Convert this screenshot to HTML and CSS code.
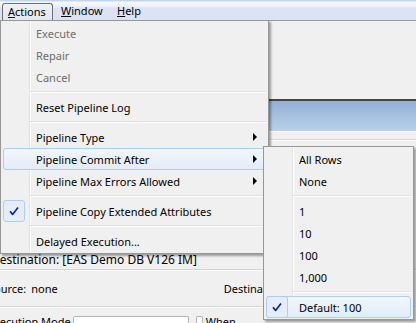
FILE: index.html
```html
<!DOCTYPE html>
<html lang="en">
<head>
    <meta charset="UTF-8">
    <title>Actions menu</title>
    <link rel="stylesheet" href="styles.css">
</head>
<body>
    <div class="app">
        <div class="menubar">
            <span class="mb-item active"><u>A</u>ctions</span>
            <span class="mb-item"><u>W</u>indow</span>
            <span class="mb-item"><u>H</u>elp</span>
        </div>
        <div class="toolbar"></div>
        <div class="section-head"></div>
        <div class="grid-area"></div>
        <div class="row dest-row">Destination: [EAS Demo DB V126 IM]</div>
        <div class="row src-row">
            <span class="src-label">Source:</span>
            <span class="src-value">none</span>
            <span class="dest-label">Destination</span>
        </div>
        <div class="row exec-row">
            <span class="exec-label">Execution Mode</span>
            <span class="field"></span>
            <span class="field small"></span>
            <span class="when">When</span>
        </div>

        <!-- Actions dropdown -->
        <div class="menu menu-main">
            <div class="mi disabled">Execute</div>
            <div class="mi disabled">Repair</div>
            <div class="mi disabled">Cancel</div>
            <div class="sep"></div>
            <div class="mi">Reset Pipeline Log</div>
            <div class="sep"></div>
            <div class="mi">Pipeline Type<span class="arr"></span></div>
            <div class="mi hl">Pipeline Commit After<span class="arr"></span></div>
            <div class="mi">Pipeline Max Errors Allowed<span class="arr"></span></div>
            <div class="sep"></div>
            <div class="mi">
                <span class="chk"><svg width="12" height="12" viewBox="0 0 12 12"><path d="M2 6.2 L4.6 9.4 L10 2.4" fill="none" stroke="#13288a" stroke-width="1.7" stroke-linejoin="round"/></svg></span>
                Pipeline Copy Extended Attributes
            </div>
            <div class="sep"></div>
            <div class="mi">Delayed Execution...</div>
        </div>

        <!-- Commit After submenu -->
        <div class="menu menu-sub">
            <div class="mi">All Rows</div>
            <div class="mi">None</div>
            <div class="sep"></div>
            <div class="mi">1</div>
            <div class="mi">10</div>
            <div class="mi">100</div>
            <div class="mi">1,000</div>
            <div class="sep"></div>
            <div class="mi hl">
                <span class="chk"><svg width="12" height="12" viewBox="0 0 12 12"><path d="M2 6.2 L4.6 9.4 L10 2.4" fill="none" stroke="#13288a" stroke-width="1.7" stroke-linejoin="round"/></svg></span>
                Default: 100
            </div>
        </div>
    </div>
</body>
</html>
```
FILE: styles.css
```css
body {
    margin: 0;
    font-family: 'Noto Sans', 'Open Sans', sans-serif;
    font-size: 11px;
    color: #000;
    background: #f0f0f0;
    overflow: hidden;
}
.app {
    position: relative;
    width: 416px;
    height: 323px;
    overflow: hidden;
}
.menubar {
    height: 20px;
    display: flex;
    align-items: flex-end;
    padding-left: 2px;
    background: linear-gradient(to bottom, #c3d6ee 0, #c3d6ee 1px, #f7f9fd 2px, #eef2fa 6px, #dce4f4 8px, #dae2f3 20px);
}
.mb-item {
    height: 17px;
    line-height: 16px;
    padding-left: 6px;
    box-sizing: border-box;
}
.mb-item:nth-child(1) { width: 51px; }
.mb-item:nth-child(2) { width: 58px; padding-left: 8px; }
.mb-item:nth-child(3) { width: 40px; }
.mb-item.active {
    padding-left: 5px;
    border: 1px solid #6f6f6f;
    border-bottom: none;
    border-radius: 3px 3px 0 0;
    background: linear-gradient(#eef1f6, #e2e7ee);
}
.toolbar {
    height: 78px;
    border-top: 1px solid #9d9d9d;
    border-bottom: 2px solid #454545;
}
.section-head {
    height: 30px;
    background: linear-gradient(#93b0d3, #b9d0ea);
}
.grid-area {
    height: 118px;
    border-top: 1px solid #fff;
    background: linear-gradient(transparent 7px, #d8d8d8 7px, #d8d8d8 8px, #fff 8px, #fff 9px, transparent 9px);
}
.row {
    display: flex;
    align-items: center;
    white-space: nowrap;
}
.dest-row {
    height: 19px;
    margin-left: -9px;
    font-size: 12px;
    border-bottom: 1px solid #d5d5d5;
}
.src-row {
    height: 35px;
    margin-left: -12px;
    border-top: 1px solid #fff;
    border-bottom: 1px solid #d5d5d5;
}
.src-value {
    margin-left: 5px;
}
.dest-label {
    margin-left: 166px;
}
.exec-row {
    height: 17px;
    margin-left: -12px;
    border-top: 1px solid #fff;
    align-items: flex-end;
}
.exec-label {
    line-height: 7px;
    height: 7px;
    padding-top: 3px;
}
.field {
    width: 114px;
    height: 8px;
    margin-left: 2px;
    border: 1px solid #b5b5b5;
    border-bottom: none;
    border-radius: 2px 2px 0 0;
    background: #fff;
}
.field.small {
    width: 5px;
    margin-left: 7px;
}
.when {
    margin-left: 3px;
    line-height: 7px;
    height: 7px;
    padding-top: 3px;
}

/* menus */
.menu {
    position: absolute;
    padding: 1px 0;
    border: 1px solid #979797;
    background-color: #f0f0f0;
    background-image: linear-gradient(to right, transparent 28px, #e2e3e3 28px, #e2e3e3 29px, #fff 29px, #fff 30px, transparent 30px);
    box-shadow: 2px 2px 2px rgba(0, 0, 0, 0.35);
}
.menu-main {
    left: 0;
    top: 20px;
    width: 267px;
}
.menu-sub {
    left: 263px;
    top: 146px;
    width: 149px;
}
.mi {
    position: relative;
    height: 22px;
    margin: 0 2px;
    padding-left: 32px;
    display: flex;
    align-items: center;
    box-sizing: border-box;
    border: 1px solid transparent;
    border-radius: 3px;
    white-space: nowrap;
}
.mi.disabled {
    color: #6d6d6d;
}
.mi.hl {
    border-color: #aecdf3;
    background: linear-gradient(#f2f6fd, #e3ecf9);
}
.sep {
    height: 8px;
    margin: 0 2px 0 29px;
    background: linear-gradient(transparent 3px, #e0e0e0 3px, #e0e0e0 4px, #fff 4px, #fff 5px, transparent 5px);
}
.arr {
    margin-left: auto;
    margin-right: 8px;
    width: 0;
    height: 0;
    border-left: 4px solid #000;
    border-top: 4px solid transparent;
    border-bottom: 4px solid transparent;
}
.chk {
    position: absolute;
    left: -1px;
    top: -1px;
    width: 22px;
    height: 22px;
    box-sizing: border-box;
    border: 1px solid #aecdf3;
    border-radius: 3px;
    background: #e4edf9;
    display: flex;
    align-items: center;
    justify-content: center;
}
```
